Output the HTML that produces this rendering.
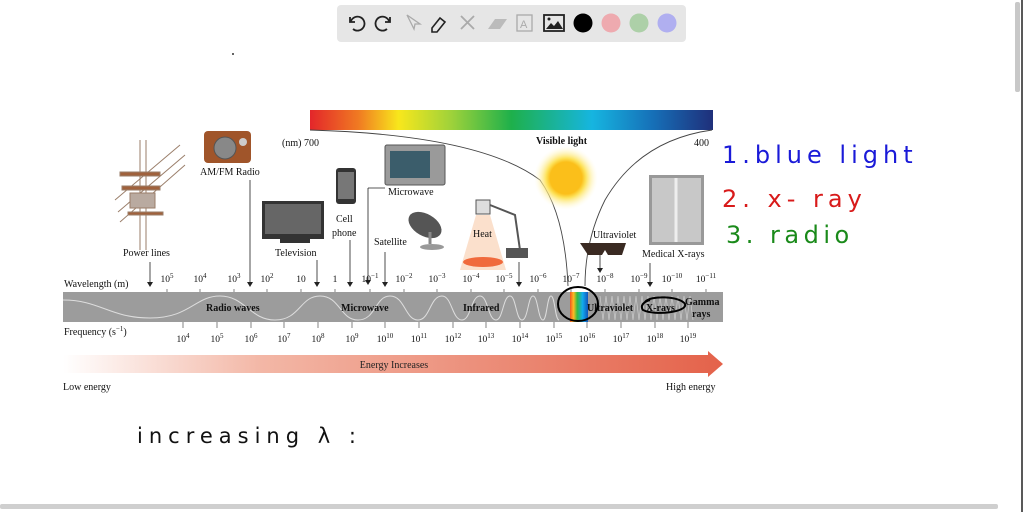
<!DOCTYPE html>
<html><head><meta charset="utf-8"><style>
html,body{margin:0;padding:0;width:1024px;height:512px;overflow:hidden;background:#fff;font-family:"Liberation Serif",serif;}
svg{position:absolute;left:0;top:0}
</style></head><body>
<svg width="1024" height="512" viewBox="0 0 1024 512" xmlns="http://www.w3.org/2000/svg">
<defs>
<linearGradient id="spec" x1="0" x2="1">
<stop offset="0" stop-color="#e3262a"/><stop offset="0.12" stop-color="#f07a22"/><stop offset="0.22" stop-color="#f8e71c"/><stop offset="0.35" stop-color="#9fd23a"/><stop offset="0.5" stop-color="#1eb04b"/><stop offset="0.7" stop-color="#16b5e0"/><stop offset="0.85" stop-color="#1670b8"/><stop offset="1" stop-color="#1f2f7a"/>
</linearGradient>
<linearGradient id="en" x1="0" x2="1">
<stop offset="0" stop-color="#fff"/><stop offset="0.3" stop-color="#f3b7a6"/><stop offset="1" stop-color="#e4624a"/>
</linearGradient>
<linearGradient id="vis" x1="0" x2="1">
<stop offset="0" stop-color="#e52"/><stop offset="0.2" stop-color="#fb2"/><stop offset="0.4" stop-color="#3b4"/><stop offset="0.7" stop-color="#1ae"/><stop offset="1" stop-color="#15b"/>
</linearGradient>
<radialGradient id="sun"><stop offset="0.5" stop-color="#fbbf1a"/><stop offset="0.62" stop-color="#fde25a"/><stop offset="1" stop-color="#fffbe0" stop-opacity="0"/></radialGradient>
</defs>

<rect x="337" y="5" width="349" height="37" rx="4" fill="#e6e6e6"/>
<g fill="none" stroke="#222" stroke-width="1.8">
<path d="M350 17 v5 h5 M351 21 a7 7 0 1 1 2 8"/>
<path d="M390 17 v5 h-5 M389 21 a7 7 0 1 0 -2 8"/>
</g>
<path d="M407 15 l7 14 l1-5 l5 0 z" fill="none" stroke="#aaa" stroke-width="1.3"/>
<path d="M432 28 l8-10 l5 4 l-8 10 h-5 z" fill="none" stroke="#222" stroke-width="1.6"/>
<path d="M461 16 l13 13 M474 16 l-13 13" stroke="#aaa" stroke-width="1.8"/>
<path d="M488 29 l7-10 h12 l-7 10 z" fill="#bbb"/>
<rect x="517" y="15" width="15" height="16" fill="none" stroke="#aaa" stroke-width="1.3"/><text x="520" y="28" font-size="11" fill="#aaa" font-family="Liberation Sans">A</text>
<rect x="544" y="15" width="20" height="16" fill="none" stroke="#222" stroke-width="1.8"/><path d="M546 29 l5-6 l3 3 l4-5 l5 8z" fill="#222"/><circle cx="549" cy="19" r="1.5" fill="#222"/>
<circle cx="583" cy="23" r="9.5" fill="#000"/>
<circle cx="611" cy="23" r="9.5" fill="#eeaaaf"/>
<circle cx="639" cy="23" r="9.5" fill="#add0a8"/>
<circle cx="667" cy="23" r="9.5" fill="#b0aff0"/>

<circle cx="233" cy="54" r="1" fill="#333"/>

<rect x="310" y="110" width="403" height="20" fill="url(#spec)"/>
<path d="M310 130 Q480 135 540 180 Q565 215 568 286" fill="none" stroke="#444" stroke-width="0.9"/>
<path d="M712 130 Q640 140 605 200 Q585 240 585 286" fill="none" stroke="#444" stroke-width="0.9"/>
<g font-size="10" fill="#111">
<text x="282" y="146">(nm)  700</text>
<text x="694" y="146">400</text>
<text x="536" y="144" font-weight="bold">Visible light</text>
</g>
<circle cx="566" cy="178" r="32" fill="url(#sun)"/>

<g stroke="#9a7e6a" stroke-width="1">
<path d="M115 200 L180 145 M118 212 L185 155 M120 222 L185 165 M140 140 L140 250 M146 140 L146 250"/>
<rect x="120" y="172" width="40" height="4" fill="#a0613c"/><rect x="122" y="186" width="38" height="4" fill="#a0613c"/><rect x="128" y="212" width="35" height="3" fill="#a0613c"/>
<rect x="130" y="193" width="25" height="15" fill="#b9aaa0"/>
</g>
<rect x="204" y="131" width="47" height="32" rx="4" fill="#a0552a"/><circle cx="225" cy="148" r="11" fill="#888" stroke="#555"/><circle cx="243" cy="142" r="4" fill="#ccc"/>
<rect x="262" y="201" width="62" height="38" fill="#333"/><rect x="265" y="204" width="56" height="30" fill="#666"/><rect x="280" y="239" width="30" height="4" fill="#333"/>
<rect x="336" y="168" width="20" height="36" rx="3" fill="#333"/><rect x="338" y="172" width="16" height="27" fill="#777"/>
<rect x="385" y="145" width="60" height="40" rx="2" fill="#9a9a9a" stroke="#555"/><rect x="390" y="151" width="40" height="27" fill="#3b5d6b"/>
<path d="M368 188 V282 M368 188 H385" stroke="#222" fill="none" stroke-width="0.8"/>
<ellipse cx="425" cy="225" rx="18" ry="11" transform="rotate(30 425 225)" fill="#555"/><path d="M430 232 v12" stroke="#888" stroke-width="3"/><ellipse cx="432" cy="247" rx="12" ry="3" fill="#999"/>
<path d="M460 270 L476 215 h14 L506 270 z" fill="#fbe0cc"/><ellipse cx="483" cy="262" rx="20" ry="5" fill="#f06a3c"/>
<rect x="476" y="200" width="14" height="14" fill="#ddd" stroke="#555"/><path d="M490 205 L515 215 L520 250" stroke="#555" stroke-width="2" fill="none"/><rect x="506" y="248" width="22" height="10" fill="#555"/>
<path d="M580 243 h46 l-4 12 h-14 l-3-5 l-3 5 h-14 z" fill="#3a2a22"/>
<rect x="649" y="175" width="55" height="70" fill="#999"/><rect x="652" y="178" width="49" height="64" fill="#c8c8c8"/><path d="M676 178 v64" stroke="#eee" stroke-width="3"/>

<g font-size="10" fill="#111">
<text x="123" y="256">Power lines</text>
<text x="200" y="175">AM/FM Radio</text>
<text x="275" y="256">Television</text>
<text x="336" y="222">Cell</text><text x="332" y="236">phone</text>
<text x="388" y="195">Microwave</text>
<text x="374" y="245">Satellite</text>
<text x="473" y="237">Heat</text>
<text x="593" y="238">Ultraviolet</text>
<text x="642" y="257">Medical X-rays</text>
</g>
<g stroke="#222" stroke-width="0.8" fill="none">
<path d="M150 262 V284 M250 180 V284 M317 260 V284 M350 240 V284 M385 252 V284 M519 262 V284 M600 255 V270 M650 263 V284"/>
</g>
<g fill="#222">
<path d="M147 282 L150 287 L153 282z M247 282 L250 287 L253 282z M314 282 L317 287 L320 282z M347 282 L350 287 L353 282z M365 280 L368 285 L371 280z M382 282 L385 287 L388 282z M516 282 L519 287 L522 282z M597 268 L600 273 L603 268z M647 282 L650 287 L653 282z"/>
</g>

<g font-size="10" fill="#111">
<text x="64" y="287">Wavelength (m)</text>
<text x="64" y="335">Frequency (s<tspan dy="-4" font-size="7">−1</tspan><tspan dy="4">)</tspan></text>
</g>
<g font-size="9.5" fill="#111" text-anchor="middle">
<text x="167" y="282">10<tspan dy="-4" font-size="7">5</tspan></text>
<text x="200" y="282">10<tspan dy="-4" font-size="7">4</tspan></text>
<text x="234" y="282">10<tspan dy="-4" font-size="7">3</tspan></text>
<text x="267" y="282">10<tspan dy="-4" font-size="7">2</tspan></text>
<text x="301" y="282">10</text>
<text x="335" y="282">1</text>
<text x="370" y="282">10<tspan dy="-4" font-size="7">−1</tspan></text>
<text x="404" y="282">10<tspan dy="-4" font-size="7">−2</tspan></text>
<text x="437" y="282">10<tspan dy="-4" font-size="7">−3</tspan></text>
<text x="471" y="282">10<tspan dy="-4" font-size="7">−4</tspan></text>
<text x="504" y="282">10<tspan dy="-4" font-size="7">−5</tspan></text>
<text x="538" y="282">10<tspan dy="-4" font-size="7">−6</tspan></text>
<text x="571" y="282">10<tspan dy="-4" font-size="7">−7</tspan></text>
<text x="605" y="282">10<tspan dy="-4" font-size="7">−8</tspan></text>
<text x="639" y="282">10<tspan dy="-4" font-size="7">−9</tspan></text>
<text x="672" y="282">10<tspan dy="-4" font-size="7">−10</tspan></text>
<text x="706" y="282">10<tspan dy="-4" font-size="7">−11</tspan></text>
</g>
<g font-size="9.5" fill="#111" text-anchor="middle">
<text x="183" y="342">10<tspan dy="-4" font-size="7">4</tspan></text>
<text x="217" y="342">10<tspan dy="-4" font-size="7">5</tspan></text>
<text x="251" y="342">10<tspan dy="-4" font-size="7">6</tspan></text>
<text x="284" y="342">10<tspan dy="-4" font-size="7">7</tspan></text>
<text x="318" y="342">10<tspan dy="-4" font-size="7">8</tspan></text>
<text x="352" y="342">10<tspan dy="-4" font-size="7">9</tspan></text>
<text x="385" y="342">10<tspan dy="-4" font-size="7">10</tspan></text>
<text x="419" y="342">10<tspan dy="-4" font-size="7">11</tspan></text>
<text x="453" y="342">10<tspan dy="-4" font-size="7">12</tspan></text>
<text x="486" y="342">10<tspan dy="-4" font-size="7">13</tspan></text>
<text x="520" y="342">10<tspan dy="-4" font-size="7">14</tspan></text>
<text x="554" y="342">10<tspan dy="-4" font-size="7">15</tspan></text>
<text x="587" y="342">10<tspan dy="-4" font-size="7">16</tspan></text>
<text x="621" y="342">10<tspan dy="-4" font-size="7">17</tspan></text>
<text x="655" y="342">10<tspan dy="-4" font-size="7">18</tspan></text>
<text x="688" y="342">10<tspan dy="-4" font-size="7">19</tspan></text>
</g>

<rect x="63" y="292" width="660" height="30" fill="#9c9c9c"/>
<path d="M63 300 C100 300 110 318 150 318 C190 318 195 296 220 296 C245 296 250 320 275 320 C300 320 300 296 320 296 C340 296 340 320 358 320 C376 320 375 296 390 296 C405 296 405 320 418 320 C430 320 430 296 442 296 C452 296 452 320 462 320 C471 320 471 296 480 296 C488 296 488 320 496 320 C503 320 503 296 510 296 C516 296 516 320 522 320 C528 320 528 296 533 296 C538 296 538 320 543 320 C547 320 547 296 551 296 C555 296 555 320 559 320" fill="none" stroke="#ddd" stroke-width="1"/>
<path d="M600 296 l3 24 l3-24 l3 24 l3-24 l3 24 l3-24 l3 24 l3-24 l3 24 l3-24 l3 24 l3-24 l3 24 l3-24 l3 24 l3-24 l3 24 l3-24 l3 24 l3-24 l3 24 l3-24 l3 24 l3-24 l3 24 l3-24 l3 24 l3-24 l3 24 l3-24 l3 24" fill="none" stroke="#ccc" stroke-width="0.7"/>
<rect x="570" y="292" width="18" height="30" fill="url(#vis)"/>
<g stroke="#333" stroke-width="0.6">
<path d="M167 289v3M200 289v3M234 289v3M267 289v3M301 289v3M335 289v3M370 289v3M404 289v3M437 289v3M471 289v3M504 289v3M538 289v3M571 289v3M605 289v3M639 289v3M672 289v3M706 289v3"/>
<path d="M183 322v6M217 322v6M251 322v6M284 322v6M318 322v6M352 322v6M385 322v6M419 322v6M453 322v6M486 322v6M520 322v6M554 322v6M587 322v6M621 322v6M655 322v6M688 322v6"/>
</g>
<g font-size="10" font-weight="bold" fill="#111">
<text x="206" y="311">Radio waves</text>
<text x="341" y="311">Microwave</text>
<text x="463" y="311">Infrared</text>
<text x="587" y="311">Ultraviolet</text>
<text x="646" y="311">X-rays</text>
<text x="685" y="305">Gamma</text><text x="692" y="317">rays</text>
</g>
<ellipse cx="578" cy="304" rx="20" ry="17" fill="none" stroke="#000" stroke-width="2"/>
<path d="M645 302 C650 295 680 296 685 304 C688 312 655 316 643 310 C640 306 643 302 650 300" fill="none" stroke="#000" stroke-width="2"/>

<path d="M63 355 H708 V351 L723 364 L708 377 V373 H63 z" fill="url(#en)"/>
<text x="394" y="368" font-size="10" fill="#222" text-anchor="middle">Energy Increases</text>
<text x="63" y="390" font-size="10" fill="#111">Low energy</text>
<text x="666" y="390" font-size="10" fill="#111">High energy</text>

<g font-family="DejaVu Sans, sans-serif" font-size="24">
<text x="722" y="163" fill="#1a1ad8" letter-spacing="5">1.blue  light</text>
<text x="722" y="207" fill="#d81a1a" letter-spacing="5">2. x- ray</text>
<text x="726" y="243" fill="#1a8a1a" letter-spacing="4.5">3.  radio</text>
<text x="137" y="443" fill="#111" font-size="21" letter-spacing="6">increasing  λ :</text>
</g>

<rect x="1015" y="2" width="5" height="90" rx="2" fill="#c8c8c8"/>
<path d="M1022 0 V512" stroke="#222" stroke-width="1.5"/>
<rect x="0" y="504" width="998" height="5" rx="2" fill="#cfcfcf"/>
</svg>
</body></html>
